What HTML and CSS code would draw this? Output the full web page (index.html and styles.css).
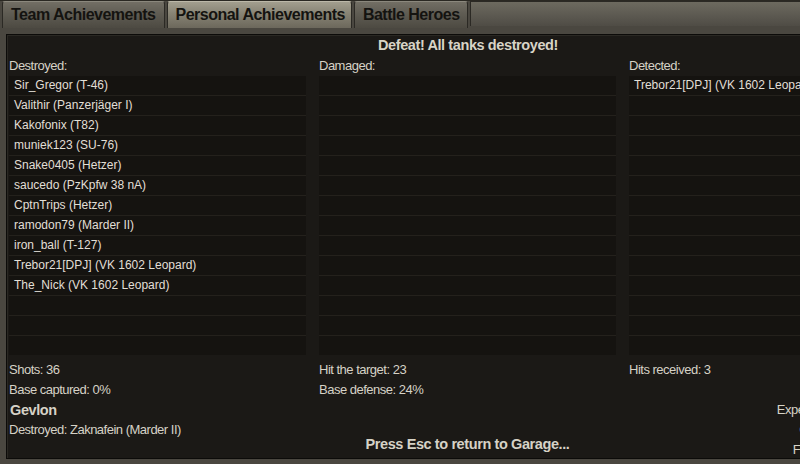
FILE: index.html
```html
<!DOCTYPE html>
<html>

<head>
    <title>Battle Results</title>
    <link rel="stylesheet" href="styles.css">
</head>

<body>
    <div class="tabs">
        <div class="tab">Team Achievements</div>
        <div class="tab active">Personal Achievements</div>
        <div class="tab">Battle Heroes</div>
        <div class="tab-rest"></div>
    </div>

    <div class="panel">
        <div class="title">Defeat! All tanks destroyed!</div>

        <div class="columns">
            <div class="column">
                <div class="label">Destroyed:</div>
                <ul class="list">
                    <li>Sir_Gregor (T-46)</li>
                    <li>Valithir (Panzerjäger I)</li>
                    <li>Kakofonix (T82)</li>
                    <li>muniek123 (SU-76)</li>
                    <li>Snake0405 (Hetzer)</li>
                    <li>saucedo (PzKpfw 38 nA)</li>
                    <li>CptnTrips (Hetzer)</li>
                    <li>ramodon79 (Marder II)</li>
                    <li>iron_ball (T-127)</li>
                    <li>Trebor21[DPJ] (VK 1602 Leopard)</li>
                    <li>The_Nick (VK 1602 Leopard)</li>
                    <li></li>
                    <li></li>
                    <li></li>
                </ul>
                <div class="stat">Shots: 36</div>
                <div class="stat">Base captured: 0%</div>
            </div>

            <div class="column">
                <div class="label">Damaged:</div>
                <ul class="list">
                    <li></li><li></li><li></li><li></li><li></li><li></li><li></li>
                    <li></li><li></li><li></li><li></li><li></li><li></li><li></li>
                </ul>
                <div class="stat">Hit the target: 23</div>
                <div class="stat">Base defense: 24%</div>
            </div>

            <div class="column">
                <div class="label">Detected:</div>
                <ul class="list">
                    <li>Trebor21[DPJ] (VK 1602 Leopard)</li>
                    <li></li><li></li><li></li><li></li><li></li><li></li>
                    <li></li><li></li><li></li><li></li><li></li><li></li><li></li>
                </ul>
                <div class="stat">Hits received: 3</div>
            </div>
        </div>

        <div class="footer">
            <div class="killed-by">
                <div class="name">Gevlon</div>
                <div class="stat">Destroyed: Zaknafein (Marder II)</div>
            </div>
            <div class="esc">Press Esc to return to Garage...</div>
            <div class="earnings">
                <div class="stat">Experience:</div>
                <div class="stat">Credits:</div>
                <div class="stat">Free XP:</div>
            </div>
        </div>
    </div>
</body>

</html>
```
FILE: styles.css
```css
html,
body {
    margin: 0;
    height: 100%;
    overflow: hidden;
}

body {
    width: 800px;
    background: #4a4740;
    font-family: "Liberation Sans", Arial, sans-serif;
    color: #d6d2c6;
}

.tabs {
    display: flex;
    height: 27px;
    border-top: 1px solid #2a2822;
    background: #4a4740;
}

.tab {
    flex: none;
    padding: 0 7px 0 8px;
    margin-right: 2px;
    line-height: 26px;
    font-size: 16px;
    letter-spacing: -0.5px;
    font-weight: bold;
    color: #141310;
    background: linear-gradient(#726e64 0%, #5f5c53 45%, #4d4a42 100%);
    border: 1px solid #2b2924;
    border-top-color: #8b887d;
    border-bottom: none;
    border-radius: 3px 3px 0 0;
}

.tab:first-child {
    margin-left: 2px;
    padding-right: 9px;
}

.tab.active {
    padding: 0 6px 0 7px;
    background: linear-gradient(#a29e8e 0%, #878374 45%, #6c685c 100%);
    border-top-color: #bcb8a8;
}

.tab-rest {
    flex: 1;
    height: 24px;
    background: linear-gradient(#6d6a5f 0%, #5b5850 60%, #4f4c45 100%);
    border-top: 1px solid #2b2924;
    border-left: 1px solid #2b2924;
}

.panel {
    width: 918px;
    margin: 6px 0 0 6px;
    padding: 0 0 0 2px;
    height: 423px;
    background: #1b1916;
    border: 1px solid #0c0b09;
    box-shadow: inset 1px 1px 0 #2a2823;
}

.title {
    text-align: center;
    font-size: 14.5px;
    letter-spacing: -0.4px;
    font-weight: bold;
    line-height: 20px;
    color: #d8d4c6;
}

.columns {
    display: grid;
    grid-template-columns: 297px 297px 297px;
    column-gap: 13px;
}

.label {
    font-size: 13px;
    letter-spacing: -0.5px;
    line-height: 21px;
}

.list {
    list-style: none;
    margin: 0 0 5px;
    padding: 0;
}

.list li {
    height: 19px;
    line-height: 19px;
    padding-left: 5px;
    background: #151310;
    border-bottom: 1px solid #24211c;
    font-size: 12px;
    color: #e2dfd6;
    white-space: nowrap;
    overflow: hidden;
}

.list li:last-child {
    border-bottom: none;
}

.stat {
    font-size: 13px;
    letter-spacing: -0.5px;
    line-height: 20px;
}

.footer {
    display: grid;
    grid-template-columns: 297px 297px 297px;
    column-gap: 13px;
}

.name {
    font-size: 14.5px;
    letter-spacing: -0.4px;
    font-weight: bold;
    line-height: 20px;
    padding-left: 1px;
}

.esc {
    align-self: end;
    text-align: center;
    font-size: 14.5px;
    letter-spacing: -0.4px;
    font-weight: bold;
    line-height: 20px;
    padding-bottom: 6px;
}

.earnings {
    text-align: right;
    padding-right: 86px;
}
```
